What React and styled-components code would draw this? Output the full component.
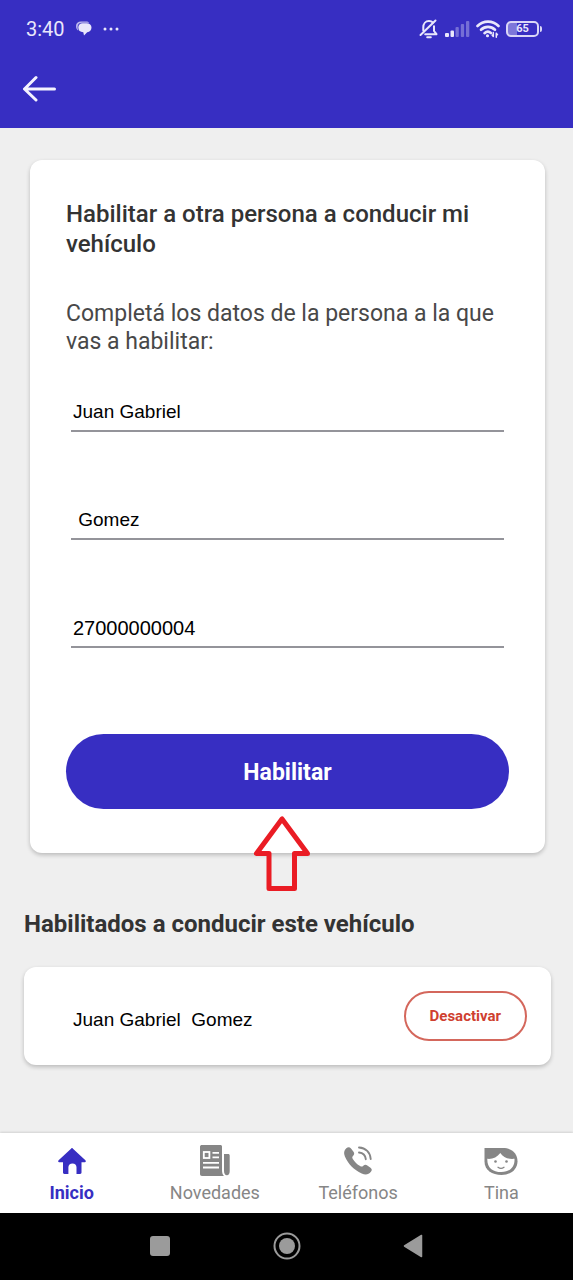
import React from "react";
import styled, { createGlobalStyle, css } from "styled-components";

const brand = "#372ec2";
const ink = "#333333";
const grey = "#868686";
const danger = "#cf3f30";

const Global = createGlobalStyle`
  *, *::before, *::after { box-sizing: border-box; }
  body { margin: 0; background: #efefef; font-family: Roboto, "Liberation Sans", sans-serif; color: ${ink}; }
  h1, h2, p { margin: 0; }
  button, input { font-family: inherit; }
  svg { display: block; }
`;

const Screen = styled.div`
  display: flex;
  flex-direction: column;
  min-height: 100vh;
`;

const TopBar = styled.header`
  background: ${brand};
  color: #e9e7fb;
  height: 128px;
`;

const StatusBar = styled.div`
  display: flex;
  align-items: center;
  justify-content: space-between;
  height: 56px;
  padding: 2px 31px 0 26px;
`;

const StatusGroup = styled.div`
  display: flex;
  align-items: center;
  gap: ${(p) => p.$gap}px;
`;

const Clock = styled.span`
  font-size: 20px;
  line-height: 24px;
`;

const Battery = styled.span`
  display: flex;
  align-items: center;
  &::after {
    content: "";
    width: 2px;
    height: 6px;
    margin-left: 1px;
    background: #d9d6f7;
    border-radius: 0 2px 2px 0;
  }
`;

const BatteryBody = styled.span`
  display: flex;
  align-items: center;
  justify-content: center;
  width: 33px;
  height: 16px;
  border: 2px solid #d9d6f7;
  border-radius: 5px;
  background: linear-gradient(to right, #7d77da 0 30%, transparent 30%);
  font-size: 11px;
  line-height: 12px;
  font-weight: 700;
`;

const BackButton = styled.button`
  display: block;
  margin: 0 0 0 16px;
  padding: 16px 7px;
  border: 0;
  background: none;
  color: #f4f3ff;
`;

const Main = styled.main`
  flex: 1;
  padding: 32px 22px 32px 24px;
`;

const Panel = styled.section`
  background: #fff;
  border-radius: 12px;
  box-shadow: 0 2px 4px rgba(0, 0, 0, 0.22);
`;

const FormPanel = styled(Panel)`
  margin: 0 6px;
  padding: 39px 36px 44px;
`;

const Title = styled.h1`
  font-size: 24px;
  line-height: 30px;
  font-weight: 500;
`;

const Intro = styled.p`
  margin-top: 41px;
  color: #484848;
  font-size: 23px;
  line-height: 28px;
  font-weight: 400;
`;

const Fields = styled.div`
  display: grid;
  gap: 68px;
  margin: 36px 5px 86px;
`;

const Field = styled.input`
  width: 100%;
  height: 40px;
  padding: 2px 2px 0;
  border: 0;
  border-bottom: 2px solid #94949a;
  border-radius: 0;
  outline: 0;
  background: transparent;
  color: #000;
  font-family: "Liberation Sans", Arial, sans-serif;
  font-size: ${(p) => (p.$numeric ? 20 : 19)}px;
`;

const Action = styled.div`
  position: relative;
`;

const pill = css`
  display: block;
  font-weight: 700;
`;

const PrimaryButton = styled.button`
  ${pill}
  width: 100%;
  height: 75px;
  padding: 2px 0 0;
  border: 0;
  border-radius: 38px;
  background: ${brand};
  color: #fff;
  font-size: 23px;
`;

const OutlineButton = styled.button`
  ${pill}
  height: 50px;
  padding: 0 24px;
  border: 2px solid #d4675c;
  border-radius: 25px;
  background: transparent;
  color: ${danger};
  font-size: 15px;
`;

const Pointer = styled.div`
  position: absolute;
  top: calc(100% + 6px);
  left: calc(50% - 35px);
`;

const SectionTitle = styled.h2`
  margin: 56px 0 28px;
  font-size: 24px;
  line-height: 30px;
  font-weight: 700;
`;

const PersonRow = styled(Panel)`
  display: flex;
  align-items: center;
  justify-content: space-between;
  min-height: 98px;
  padding: 0 24px 0 49px;
`;

const PersonName = styled.span`
  padding-top: 8px;
  color: #000;
  font-family: "Liberation Sans", Arial, sans-serif;
  font-size: 19px;
  white-space: pre;
`;

const Tabs = styled.nav`
  display: grid;
  grid-template-columns: repeat(4, 1fr);
  height: 80px;
  background: #fff;
  box-shadow: 0 -1px 2px rgba(0, 0, 0, 0.12);
`;

const Tab = styled.a`
  display: flex;
  flex-direction: column;
  align-items: center;
  gap: 2px;
  padding-top: 10px;
  color: ${(p) => (p.$active ? brand : grey)};
  font-size: 18px;
  line-height: 24px;
  font-weight: ${(p) => (p.$active ? 700 : 400)};
  text-decoration: none;
`;

const SystemBar = styled.footer`
  display: grid;
  grid-template-columns: repeat(3, 1fr);
  height: 67px;
  padding: 0 17% 2px;
  background: #000;
`;

const SystemButton = styled.button`
  display: grid;
  place-items: center;
  padding: 0;
  border: 0;
  background: none;
  color: #9b9b9b;
`;

const ChatIcon = () => (
  <svg width="16" height="16" viewBox="0 0 16 16" fill="currentColor" aria-hidden="true">
    <path d="M0 5C0 2 2 .5 5 .5h5c1.500 0 2.500.4 3.300 1.200H6C3 1.700 1.400 3.400 1.600 6.500 1.700 8 2 9 2.500 9.800 1 9 0 7.500 0 5z" opacity=".75" />
    <path d="M6.500 2.300h4.200c2.900 0 4.800 1.800 4.800 4.300 0 2.600-1.700 4.400-4.300 4.700L8 14.500 7.300 11.300C4 11.300 2.300 9.500 2.300 6.600c0-2.600 1.600-4.300 4.200-4.300z" />
  </svg>
);

const DotsIcon = () => (
  <svg width="16" height="4" viewBox="0 0 16 4" fill="currentColor" aria-hidden="true">
    <circle cx="2" cy="2" r="1.500" />
    <circle cx="8" cy="2" r="1.500" />
    <circle cx="14" cy="2" r="1.500" />
  </svg>
);

const MutedBellIcon = () => (
  <svg width="20" height="20" viewBox="0 0 20 20" fill="none" stroke="currentColor" strokeWidth="2" strokeLinecap="round" strokeLinejoin="round" aria-hidden="true">
    <path d="M4.300 11.500V8.300C4.300 4.800 6.500 2 10 2c1.600 0 2.900.5 3.900 1.500M15 7.200V12l2.500 3.200H6.200" />
    <path d="M16.500 1.500L1.500 16" />
    <path d="M8.200 18.300h3.600" />
  </svg>
);

const SignalIcon = () => (
  <svg width="25" height="16" viewBox="0 0 25 16" fill="currentColor" aria-hidden="true">
    <rect x="0" y="12" width="4" height="4" rx="1" />
    <rect x="5.500" y="9.500" width="3.500" height="6.500" rx="1" />
    <g opacity=".35">
      <rect x="10.500" y="6" width="3.300" height="10" rx="1" />
      <rect x="15.800" y="3" width="3.300" height="13" rx="1" />
      <rect x="21" y="0" width="3.300" height="16" rx="1" />
    </g>
  </svg>
);

const WifiIcon = () => (
  <svg width="24" height="18" viewBox="0 0 24 18" fill="none" stroke="currentColor" strokeWidth="2.600" strokeLinecap="round" aria-hidden="true">
    <path d="M1.500 6C7.300.2 16.700.2 22.500 6" />
    <path d="M5 9.800c4-3.900 10-3.900 14 0" />
    <path d="M8.500 13.200c2-1.900 4.600-1.900 6.400-.2" />
    <circle cx="11.500" cy="15.800" r=".8" fill="currentColor" strokeWidth="1.500" />
    <path d="M17.300 12.500v4M17.300 16.500l-1.200-1.500M20.300 17.200v-4M20.300 13.200l1.200 1.500" strokeWidth="1.500" />
  </svg>
);

const BackIcon = () => (
  <svg width="34" height="34" viewBox="0 0 34 34" fill="none" stroke="currentColor" strokeWidth="3" strokeLinecap="round" strokeLinejoin="round" aria-hidden="true">
    <path d="M31.500 17H2M13 5.500L1.500 17 13 28" />
  </svg>
);

const PointerIcon = () => (
  <svg width="58" height="77" viewBox="0 0 58 77" fill="none" stroke="#ea1c24" strokeWidth="5" strokeLinejoin="round" aria-hidden="true">
    <path d="M29 4L3.500 38.500H16V73.500H41.500V38.500H54.500z" />
  </svg>
);

const HomeIcon = () => (
  <svg width="36" height="36" viewBox="0 0 36 36" fill="currentColor" aria-hidden="true">
    <path d="M17.300 5.400c.4-.4 1-.4 1.400 0L31.400 17.300c.8.800.5 1.900-.6 1.900H27.500V29.500c0 .9-.5 1.400-1.400 1.400H22.500V24.300c0-2.300-1.500-3.800-4-3.800s-4.100 1.500-4.100 3.800v6.600H10.400c-.9 0-1.400-.5-1.400-1.400V19.200H5.200c-1.100 0-1.400-1.100-.6-1.900z" />
  </svg>
);

const NewsIcon = () => (
  <svg width="36" height="36" viewBox="0 0 36 36" aria-hidden="true">
    <path d="M5 2h18.500c.8 0 1.500.7 1.500 1.500V27c0 3 .7 4.800 2 6H5c-1.200 0-2-.8-2-2V3.500C3 2.600 3.800 2 5 2z" fill="currentColor" />
    <path d="M27 11h4.200c.9 0 1.500.6 1.500 1.500V28c0 2.700-.9 4.200-2.800 4.200S27 30.700 27 28z" fill="currentColor" />
    <g fill="none" stroke="#fff" strokeWidth="1.800">
      <rect x="6.800" y="9" width="5.600" height="6" />
      <path d="M15.500 9.800H22M15.500 14.300H22M6 19.800H22M6 24.500H22" />
    </g>
  </svg>
);

const PhoneIcon = () => (
  <svg width="36" height="36" viewBox="0 0 36 36" aria-hidden="true">
    <path d="M6.300 5.200C8 3.700 9.700 3.900 11 5.500l2.500 3.300c1 1.400.9 2.700-.3 3.900-1.100 1.100-1.200 2-.4 3.200 1.800 2.800 4.300 5.300 7.300 7.200 1.200.8 2.200.7 3.200-.4 1.300-1.200 2.600-1.300 4-.3l3.200 2.300c1.500 1.100 1.700 2.500.4 4-2.300 2.900-5.400 3.500-9.200 1.700C13.800 26.600 8.200 20.900 4.900 13.400 3.500 10.100 3.900 7.300 6.300 5.200z" fill="currentColor" />
    <g fill="none" stroke="currentColor" strokeWidth="1.900" strokeLinecap="round">
      <path d="M19 4.500c6.700.3 11.300 4.900 11.700 11.500" />
      <path d="M19 9.500c3.900.4 6.400 2.800 6.800 6.700" />
    </g>
  </svg>
);

const TinaIcon = () => (
  <svg width="36" height="36" viewBox="0 0 36 36" aria-hidden="true">
    <path d="M1.500 5H20c8.500 0 14.500 5.300 14.500 13.200S28 32 18.500 32 1.500 27 1.500 18.500z" fill="currentColor" />
    <path d="M4.300 15.800C9.500 16.300 14 14.300 17.300 10c3 4.500 8 6.500 14.200 5.800.4 8-4.500 13.300-13.200 13.300C9.500 29.100 4 24.500 4.300 15.800z" fill="#fff" />
    <circle cx="12.500" cy="18.500" r="1.300" fill="currentColor" />
    <circle cx="23.500" cy="18.500" r="1.300" fill="currentColor" />
    <path d="M15 24.300c2 1.500 4 1.500 6 0" fill="none" stroke="currentColor" strokeWidth="1.300" strokeLinecap="round" />
  </svg>
);

const RecentsIcon = () => (
  <svg width="22" height="22" viewBox="0 0 22 22" aria-hidden="true">
    <rect x="1" y="1" width="20" height="20" rx="3" fill="currentColor" />
  </svg>
);

const CircleIcon = () => (
  <svg width="28" height="28" viewBox="0 0 28 28" aria-hidden="true">
    <circle cx="14" cy="14" r="12.500" fill="none" stroke="currentColor" strokeWidth="2" />
    <circle cx="14" cy="14" r="8" fill="currentColor" />
  </svg>
);

const TriangleIcon = () => (
  <svg width="20" height="24" viewBox="0 0 20 24" aria-hidden="true">
    <path d="M18.500 1.500v21L1.500 12z" fill="currentColor" stroke="currentColor" strokeWidth="1.500" strokeLinejoin="round" />
  </svg>
);

const tabs = [
  { label: "Inicio", Icon: HomeIcon, active: true },
  { label: "Novedades", Icon: NewsIcon },
  { label: "Teléfonos", Icon: PhoneIcon },
  { label: "Tina", Icon: TinaIcon },
];

export default function App() {
  return (
    <>
      <Global />
      <Screen>
        <TopBar>
          <StatusBar>
            <StatusGroup $gap={11}>
              <Clock>3:40</Clock>
              <ChatIcon />
              <DotsIcon />
            </StatusGroup>
            <StatusGroup $gap={6}>
              <MutedBellIcon />
              <SignalIcon />
              <WifiIcon />
              <Battery>
                <BatteryBody>65</BatteryBody>
              </Battery>
            </StatusGroup>
          </StatusBar>
          <BackButton type="button" aria-label="Volver">
            <BackIcon />
          </BackButton>
        </TopBar>

        <Main>
          <FormPanel as="form" onSubmit={(e) => e.preventDefault()}>
            <Title>Habilitar a otra persona a conducir mi vehículo</Title>
            <Intro>Completá los datos de la persona a la que vas a habilitar:</Intro>
            <Fields>
              <Field aria-label="Nombre" defaultValue="Juan Gabriel" />
              <Field aria-label="Apellido" defaultValue=" Gomez" />
              <Field aria-label="CUIL" inputMode="numeric" defaultValue="27000000004" $numeric />
            </Fields>
            <Action>
              <PrimaryButton type="submit">Habilitar</PrimaryButton>
              <Pointer>
                <PointerIcon />
              </Pointer>
            </Action>
          </FormPanel>

          <SectionTitle>Habilitados a conducir este vehículo</SectionTitle>
          <PersonRow>
            <PersonName>{"Juan Gabriel  Gomez"}</PersonName>
            <OutlineButton type="button">Desactivar</OutlineButton>
          </PersonRow>
        </Main>

        <Tabs>
          {tabs.map(({ label, Icon, active }) => (
            <Tab key={label} href="#" $active={active} aria-current={active ? "page" : undefined}>
              <Icon />
              {label}
            </Tab>
          ))}
        </Tabs>
        <SystemBar>
          <SystemButton type="button" aria-label="Recientes">
            <RecentsIcon />
          </SystemButton>
          <SystemButton type="button" aria-label="Inicio del sistema">
            <CircleIcon />
          </SystemButton>
          <SystemButton type="button" aria-label="Atrás">
            <TriangleIcon />
          </SystemButton>
        </SystemBar>
      </Screen>
    </>
  );
}
